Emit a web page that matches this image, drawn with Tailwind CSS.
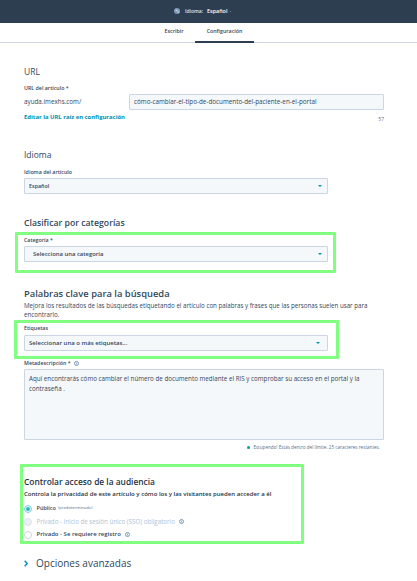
<!DOCTYPE html>
<html lang="es">
<head>
    <meta charset="UTF-8">
    <title>Configuración del artículo</title>
    <script src="https://cdn.jsdelivr.net/npm/@tailwindcss/browser@4"></script>
</head>
<body class="bg-white font-['Open_Sans',sans-serif] text-[#33475b] overflow-hidden">
    <div class="w-[417px] h-[581px] overflow-hidden">
        <!-- top bar -->
        <div class="h-[23px] bg-[#2d3e50] flex items-center justify-center text-[5px] font-semibold text-white">
            <svg class="w-[6px] h-[6px] mr-[5px] ml-[-12px] mb-[1px]" viewBox="0 0 10 10"><circle cx="5" cy="5" r="5" fill="#7c98b6"/><path d="M2 3h4v2H3zM6 6h3v2H6z" fill="#cbd6e2"/></svg>
            <span class="text-[#dfe3eb] mr-[4px]">Idioma:</span>
            <span class="text-[5.4px]">Español</span>
            <span class="ml-[2px] text-[#99acc2]">-</span>
        </div>
        <!-- tabs -->
        <div class="h-[20px] border-b border-[#cbd6e2] flex justify-center text-[5.3px] font-semibold text-[#33475b]">
            <div class="w-[40px] ml-[-9px] pt-[5px] text-center">Escribir</div>
            <div class="w-[59px] ml-[1px] pt-[5px] h-[20px] text-center border-b-2 border-[#2d3e50]">Configuración</div>
        </div>

        <div class="pl-[24px]">
            <!-- URL -->
            <h2 class="text-[8.5px] leading-[12px] mt-[23px]">URL</h2>
            <div class="text-[5.3px] leading-[8px] font-semibold mt-[6px]">URL del artículo *</div>
            <div class="flex items-center mt-[2px] w-[360px]">
                <span class="w-[105px] text-[6.3px]">ayuda.imexhs.com/</span>
                <div class="h-[16px] flex-1 bg-[#f5f8fa] border border-[#cbd6e2] rounded-[1px] pl-[4px] text-[6.3px] leading-[14px] whitespace-nowrap">cómo-cambiar-el-tipo-de-documento-del-paciente-en-el-portal</div>
            </div>
            <div class="flex justify-between w-[360px] mt-[3px]">
                <a class="text-[5.9px] leading-[8px] font-bold text-[#0091ae]">Editar la URL raíz en configuración</a>
                <span class="text-[5px] leading-[8px] mt-[2px] text-[#516f90]">57</span>
            </div>

            <!-- Idioma -->
            <h2 class="text-[8.5px] leading-[12px] mt-[26px]">Idioma</h2>
            <div class="text-[5.3px] leading-[8px] font-semibold mt-[7px]">Idioma del artículo</div>
            <div class="w-[304px] h-[16px] mt-[2px] bg-[#f5f8fa] border border-[#cbd6e2] rounded-[1px] flex items-center justify-between pl-[4px] pr-[5px] text-[5.4px] font-semibold">
                <span>Español</span>
                <span class="w-0 h-0 border-x-[2px] border-x-transparent border-t-[2px] border-t-[#0091ae]"></span>
            </div>

            <!-- Categorias -->
            <h2 class="text-[8.7px] leading-[12px] mt-[23px] font-semibold">Clasificar por categorías</h2>
            <div class="w-[321px] h-[41px] ml-[-9px] mt-[3px] border-[3px] border-[#80ff80] rounded-[1px] pl-[6px] pt-[1px]">
                <div class="text-[5.3px] leading-[8px] font-semibold">Categoría *</div>
                <div class="w-[304px] h-[16px] mt-[2px] bg-[#f5f8fa] border border-[#cbd6e2] rounded-[1px] flex items-center justify-between pl-[8px] pr-[5px] text-[5.9px] font-semibold">
                    <span>Selecciona una categoría</span>
                    <span class="w-0 h-0 border-x-[2px] border-x-transparent border-t-[2px] border-t-[#0091ae]"></span>
                </div>
            </div>

            <!-- Palabras clave -->
            <h2 class="text-[9.4px] leading-[12px] mt-[15px] font-semibold">Palabras clave para la búsqueda</h2>
            <p class="text-[6.2px] leading-[9px] mt-[1px] w-[355px]">Mejora los resultados de las búsquedas etiquetando el artículo con palabras y frases que las personas suelen usar para encontrarlo.</p>
            <div class="w-[325px] h-[39px] ml-[-10px] mt-[1px] border-[3px] border-[#80ff80] rounded-[1px] pl-[7px] pt-[1px]">
                <div class="text-[5.3px] leading-[8px] font-semibold">Etiquetas</div>
                <div class="w-[304px] h-[16px] mt-[3px] bg-[#f5f8fa] border border-[#cbd6e2] rounded-[1px] flex items-center justify-between pl-[4px] pr-[7px] text-[6px] font-semibold">
                    <span>Seleccionar una o más etiquetas...</span>
                    <span class="w-0 h-0 border-x-[2px] border-x-transparent border-t-[2px] border-t-[#0091ae]"></span>
                </div>
            </div>
            <div class="text-[5.3px] leading-[8px] font-semibold flex items-center">Metadescripción *
                <svg class="w-[5px] h-[5px] ml-[3px]" viewBox="0 0 10 10"><circle cx="5" cy="5" r="4" fill="none" stroke="#7c98b6" stroke-width="2"/><rect x="4.2" y="3" width="1.6" height="4" fill="#7c98b6"/></svg>
            </div>
            <div class="w-[360px] h-[71px] mt-[2px] bg-[#f5f8fa] border border-[#cbd6e2] rounded-[1px] px-[4px] pt-[4px] text-[6.25px] leading-[9.5px]">Aquí encontrarás cómo cambiar el número de documento mediante el RIS y comprobar su acceso en el portal y la contraseña .</div>
            <div class="flex items-center w-[356px] justify-end mt-[4px] text-[4.6px] leading-[6px] text-[#516f90]">
                <span class="w-[3px] h-[3px] rounded-full bg-[#00a38d] mr-[3px]"></span>
                <span>Estupendo! Estás dentro del límite. 25 caracteres restantes.</span>
            </div>

            <!-- Audiencia -->
            <div class="w-[284px] h-[80px] ml-[-4px] mt-[14px] border-[3px] border-[#80ff80] rounded-[1px] pl-[1px] pt-[9px]">
                <h2 class="text-[8.4px] leading-[12px] font-semibold text-[#253342]">Controlar acceso de la audiencia</h2>
                <p class="text-[6.05px] leading-[9px] mt-[2px] font-semibold text-[#253342] whitespace-nowrap">Controla la privacidad de este artículo y cómo los y las visitantes pueden acceder a él</p>
                <div class="flex items-center h-[13px] mt-[3px] text-[5.5px] font-semibold">
                    <span class="w-[8px] h-[8px] rounded-full border border-[#7fd1de] bg-[#e5f5f8] flex items-center justify-center mr-[4.5px]"><span class="w-[4px] h-[4px] rounded-full bg-[#33b6ca]"></span></span>
                    <span>Público</span>
                    <span class="ml-[2px] text-[4.2px] font-normal text-[#516f90]">(predeterminado)</span>
                </div>
                <div class="flex items-center h-[13px] text-[6.2px] text-[#b0c1d4]">
                    <span class="w-[8px] h-[8px] rounded-full border border-[#dfe3eb] bg-[#eaf0f6] mr-[4.5px]"></span>
                    <span>Privado - Inicio de sesión único (SSO) obligatorio</span>
                    <svg class="w-[5px] h-[5px] ml-[4px]" viewBox="0 0 10 10"><circle cx="5" cy="5" r="4" fill="none" stroke="#7c98b6" stroke-width="2"/><rect x="4.2" y="3" width="1.6" height="4" fill="#7c98b6"/></svg>
                </div>
                <div class="flex items-center h-[13px] text-[6px] font-semibold">
                    <span class="w-[8px] h-[8px] rounded-full border border-[#cbd6e2] bg-white mr-[4.5px]"></span>
                    <span>Privado - Se requiere registro</span>
                    <svg class="w-[5px] h-[5px] ml-[4px]" viewBox="0 0 10 10"><circle cx="5" cy="5" r="4" fill="none" stroke="#7c98b6" stroke-width="2"/><rect x="4.2" y="3" width="1.6" height="4" fill="#7c98b6"/></svg>
                </div>
            </div>

            <!-- Opciones avanzadas -->
            <div class="flex items-center mt-[13px] h-[12px]">
                <svg class="w-[4px] h-[7px] mr-[8px]" viewBox="0 0 4 7"><path d="M0.7 0.7L3.2 3.5L0.7 6.3" fill="none" stroke="#0091ae" stroke-width="1.4"/></svg>
                <span class="text-[10px] text-[#33475b]">Opciones avanzadas</span>
            </div>
        </div>
    </div>
</body>
</html>
